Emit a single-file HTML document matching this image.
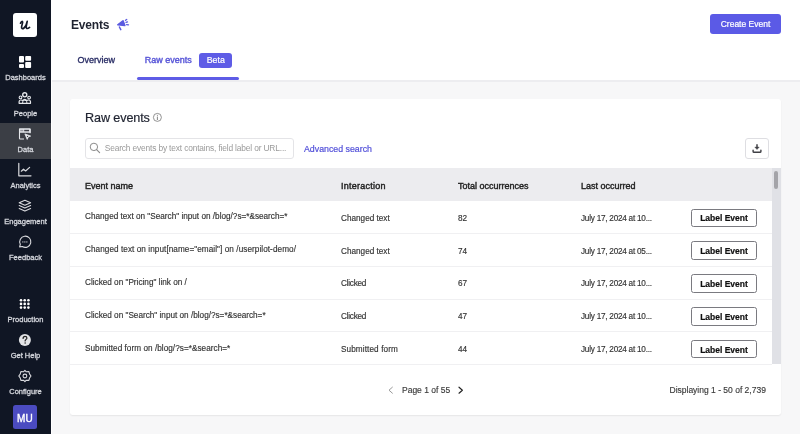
<!DOCTYPE html>
<html><head><meta charset="utf-8">
<style>
*{box-sizing:border-box;margin:0;padding:0}
html,body{width:800px;height:434px;overflow:hidden;background:#f7f7f8;font-family:"Liberation Sans",sans-serif;position:relative}
.abs{position:absolute}
.t{position:absolute;white-space:nowrap;line-height:1}
svg{position:absolute;overflow:visible}
</style></head><body>
<div style="position:absolute;left:0;top:0;width:800px;height:434px;will-change:transform">
<div class="abs" style="left:0;top:0;width:51px;height:434px;background:#101624"></div>
<div class="abs" style="left:51px;top:0;width:1px;height:434px;background:#fff"></div>
<div class="abs" style="left:13px;top:13px;width:24px;height:24px;background:#fff;border-radius:3px"></div>
<svg style="left:13px;top:13px" width="24" height="24" viewBox="0 0 24 24"><path d="M7.5 10.2 C8.3 8.2 9.8 7.8 9.6 9.6 L8.6 13.6 C8.2 15.6 9.6 16.2 11 15 C12.4 13.8 13.6 11.4 14.2 8.4 M14.2 8.4 L13.2 13.6 C12.9 15.4 14 16.3 16.6 14.4" fill="none" stroke="#111827" stroke-width="1.65" stroke-linecap="round" stroke-linejoin="round"/></svg>
<div class="abs" style="left:0;top:123px;width:51px;height:36px;background:#3b3e45"></div>
<svg style="left:0;top:0" width="51" height="434" viewBox="0 0 51 434">
 <g fill="#fff">
  <rect x="19" y="56" width="5" height="6.6" rx="1"/>
  <rect x="25.2" y="56" width="5.9" height="4.8" rx="1"/>
  <rect x="19" y="63.9" width="5" height="4" rx="1"/>
  <rect x="25.2" y="62" width="5.9" height="5.9" rx="1"/>
 </g>
 <g fill="none" stroke="#e5e7eb" stroke-linejoin="round">
  <circle cx="24.75" cy="94.8" r="2.05" stroke-width="1.35"/>
  <circle cx="20.5" cy="97.4" r="1.35" stroke-width="1.1"/>
  <circle cx="29.1" cy="97.6" r="1.35" stroke-width="1.1"/>
  <path d="M19.1 103.3 V101.9 Q19.1 100 21 100 Q22.2 100 22.8 100.6 Q23.5 99.4 24.75 99.4 Q26 99.4 26.7 100.6 Q27.3 100 28.5 100 Q30.5 100 30.5 101.9 V103.3 Z" stroke-width="1.2"/>
  <path d="M22.7 103.2 V101.8 Q22.7 100.3 24.75 100.3 Q26.8 100.3 26.8 101.8 V103.2" stroke-width="1"/>
 </g>
 <path d="M19.6 128.2 H30 Q30.6 128.2 30.6 128.8 V132.8 H19 V128.8 Q19 128.2 19.6 128.2 Z" fill="#e5e7eb"/>
 <rect x="24.2" y="129.8" width="5" height="1.5" fill="#3b3e45"/>
 <rect x="20.2" y="129.8" width="3.2" height="1.5" fill="#9a9ca3"/>
 <g fill="none" stroke="#e5e7eb" stroke-width="1.1" stroke-linejoin="round">
  <path d="M24 139 H20.2 Q19.5 139 19.5 138.3 V129 M30.1 129 V133.2"/>
 </g>
 <path d="M24.9 133.9 L30.7 136.1 L28.2 137 L27.2 139.4 Z" fill="#e5e7eb" stroke="#e5e7eb" stroke-width="0.8" stroke-linejoin="round"/>
 <circle cx="27.5" cy="136.4" r="0.6" fill="#3b3e45"/>
 <g fill="none" stroke="#d9dade" stroke-width="1.2" stroke-linecap="round" stroke-linejoin="round">
  <path d="M18.8 163.3 V175.8 H31"/>
  <path d="M21.3 171.2 L23.5 169.2 L25.6 171 L29.6 167.4"/>
 </g>
 <g fill="none" stroke="#d9dade" stroke-width="1.1" stroke-linejoin="round" stroke-linecap="round">
  <path d="M19.2 202.7 L24.9 200.2 L30.6 202.7 L24.9 205.2 Z"/>
  <path d="M19.2 205.6 L24.9 208.1 L30.6 205.6"/>
  <path d="M19.2 208.6 L24.9 211.1 L30.6 208.6"/>
 </g>
 <g fill="none" stroke="#d9dade" stroke-width="1.1">
  <path d="M19.6 246.9 L20.3 244.3 A5.6 5.6 0 1 1 22.3 246.5 Z" stroke-linejoin="round"/>
 </g>
 <g fill="#d9dade"><rect x="22.3" y="241.4" width="1.1" height="1.1"/><rect x="24.3" y="241.4" width="1.1" height="1.1"/><rect x="26.3" y="241.4" width="1.1" height="1.1"/></g>
 <g fill="#fff">
  <circle cx="21" cy="300.2" r="1.3"/><circle cx="24.7" cy="300.2" r="1.3"/><circle cx="28.4" cy="300.2" r="1.3"/>
  <circle cx="21" cy="303.9" r="1.3"/><circle cx="24.7" cy="303.9" r="1.3"/><circle cx="28.4" cy="303.9" r="1.3"/>
  <circle cx="21" cy="307.6" r="1.3"/><circle cx="24.7" cy="307.6" r="1.3"/><circle cx="28.4" cy="307.6" r="1.3"/>
 </g>
 <circle cx="24.9" cy="340" r="6" fill="#e2e3e6"/>
 <path d="M23.1 338.4 C23.1 336.9 24 336.3 25 336.3 C26.1 336.3 26.9 337 26.9 338 C26.9 339.3 25.1 339.5 25.1 341" fill="none" stroke="#222" stroke-width="1.2" stroke-linecap="round"/>
 <circle cx="25.1" cy="343" r="0.75" fill="#222"/>
 <g fill="none" stroke="#d9dade" stroke-width="1.1" stroke-linejoin="round">
  <path d="M24.9 370.3 L26.3 371.8 L28.9 371.6 L29.6 374.1 L31 376 L29.6 377.9 L28.9 380.4 L26.3 380.2 L24.9 381.7 L23.5 380.2 L20.9 380.4 L20.2 377.9 L18.8 376 L20.2 374.1 L20.9 371.6 L23.5 371.8 Z"/>
  <circle cx="24.9" cy="376" r="1.9"/>
 </g>
</svg>
<div class="t" style="left:0px;top:74px;font-size:7.5px;color:#d4d6dc;width:51px;text-align:center;-webkit-text-stroke:0.3px #d4d6dc;">Dashboards</div>

<div class="t" style="left:0px;top:110px;font-size:7.5px;color:#d4d6dc;width:51px;text-align:center;-webkit-text-stroke:0.3px #d4d6dc;">People</div>

<div class="t" style="left:0px;top:146px;font-size:7.5px;color:#d4d6dc;width:51px;text-align:center;-webkit-text-stroke:0.3px #d4d6dc;">Data</div>

<div class="t" style="left:0px;top:182px;font-size:7.5px;color:#d4d6dc;width:51px;text-align:center;-webkit-text-stroke:0.3px #d4d6dc;">Analytics</div>

<div class="t" style="left:0px;top:218px;font-size:7.5px;color:#d4d6dc;width:51px;text-align:center;-webkit-text-stroke:0.3px #d4d6dc;">Engagement</div>

<div class="t" style="left:0px;top:254px;font-size:7.5px;color:#d4d6dc;width:51px;text-align:center;-webkit-text-stroke:0.3px #d4d6dc;">Feedback</div>

<div class="t" style="left:0px;top:316px;font-size:7.5px;color:#d4d6dc;width:51px;text-align:center;-webkit-text-stroke:0.3px #d4d6dc;">Production</div>

<div class="t" style="left:0px;top:352px;font-size:7.5px;color:#d4d6dc;width:51px;text-align:center;-webkit-text-stroke:0.3px #d4d6dc;">Get Help</div>

<div class="t" style="left:0px;top:388px;font-size:7.5px;color:#d4d6dc;width:51px;text-align:center;-webkit-text-stroke:0.3px #d4d6dc;">Configure</div>

<div class="abs" style="left:13px;top:405px;width:24px;height:24px;background:#4b4bc0;border-radius:2.5px"></div>
<div class="t" style="left:13px;top:414px;font-size:10px;color:#fff;letter-spacing:0.3px;width:24px;text-align:center;-webkit-text-stroke:0.35px #fff;">MU</div>

<div class="abs" style="left:52px;top:0;width:748px;height:80px;background:#fff"></div>
<div class="abs" style="left:52px;top:80px;width:748px;height:2px;background:#ededf0"></div>
<div class="t" style="left:71px;top:19px;font-size:12px;color:#1f2330;font-weight:700;letter-spacing:-0.2px;">Events</div>

<svg style="left:112px;top:14px" width="22" height="22" viewBox="0 0 22 22">
 <path d="M5.8 10.8 L11 6.8 L12.8 11.5 Z" fill="#5b5be0" stroke="#5b5be0" stroke-width="1.6" stroke-linejoin="round"/>
 <path d="M7.4 13 L8.8 15.6" stroke="#5b5be0" stroke-width="1.5" stroke-linecap="round"/>
 <path d="M13.5 6.3 L14.7 5.4" stroke="#5b5be0" stroke-width="1.3" stroke-linecap="round"/>
 <path d="M14 8.4 L15.5 7.9" stroke="#5b5be0" stroke-width="1.3" stroke-linecap="round"/>
 <path d="M14.6 10.6 L16.5 10.8" stroke="#5b5be0" stroke-width="1.3" stroke-linecap="round"/>
</svg>
<div class="abs" style="left:710px;top:14px;width:71px;height:20px;background:#5b5ae6;border-radius:3px"></div>
<div class="t" style="left:710px;top:20px;font-size:8.5px;color:#fff;width:71px;text-align:center;-webkit-text-stroke:0.2px #fff;">Create Event</div>

<div class="t" style="left:77.5px;top:56px;font-size:9px;color:#262a63;-webkit-text-stroke:0.3px #262a63;">Overview</div>

<div class="t" style="left:144.7px;top:56px;font-size:9px;color:#5957d8;-webkit-text-stroke:0.4px #5957d8;">Raw events</div>

<div class="abs" style="left:199.4px;top:52.6px;width:32.6px;height:15.2px;background:#5e5ce6;border-radius:3px"></div>
<div class="t" style="left:199.5px;top:56px;font-size:8.8px;color:#fff;width:32.5px;text-align:center;-webkit-text-stroke:0.2px #fff;">Beta</div>

<div class="abs" style="left:137px;top:77px;width:102px;height:2.6px;background:#5e5ce6;border-radius:2px"></div>
<div class="abs" style="left:70px;top:99px;width:711px;height:316px;background:#fff;border-radius:3px;box-shadow:0 1px 1.5px rgba(0,0,0,.07)"></div>
<div class="t" style="left:85px;top:112px;font-size:12.6px;color:#1f2330;letter-spacing:-0.1px;-webkit-text-stroke:0.2px #1f2330;">Raw events</div>

<svg style="left:148px;top:108px" width="20" height="20" viewBox="0 0 20 20">
 <circle cx="9.4" cy="9.4" r="4" fill="none" stroke="#777" stroke-width="0.8"/>
 <path d="M9.4 8.6 V12" stroke="#777" stroke-width="0.9"/>
 <circle cx="9.4" cy="7.3" r="0.55" fill="#777"/>
</svg>
<div class="abs" style="left:84.5px;top:138px;width:209.5px;height:20.5px;border:1px solid #e4e4e7;border-radius:3px;background:#fff"></div>
<svg style="left:82px;top:134px" width="30" height="28" viewBox="0 0 30 28">
 <circle cx="11.9" cy="12.9" r="3.7" fill="none" stroke="#8a8a8a" stroke-width="1"/>
 <path d="M14.6 15.6 L17.6 18.6" stroke="#8a8a8a" stroke-width="1.1" stroke-linecap="round"/>
</svg>
<div class="t" style="left:104.8px;top:144px;font-size:8.4px;color:#9a9a9a;letter-spacing:-0.16px;">Search events by text contains, field label or URL...</div>

<div class="t" style="left:304px;top:145px;font-size:8.8px;color:#5250d9;-webkit-text-stroke:0.2px #5250d9;">Advanced search</div>

<div class="abs" style="left:745px;top:137.5px;width:24px;height:21px;border:1px solid #dedee2;border-radius:3px;background:#fff"></div>
<svg style="left:740px;top:132px" width="34" height="32" viewBox="0 0 34 32">
 <path d="M17 12.3 V16" stroke="#3f3f44" stroke-width="1.5"/>
 <path d="M14.8 15.1 L19.2 15.1 L17 17.6 Z" fill="#3f3f44" stroke="#3f3f44" stroke-width="0.4" stroke-linejoin="round"/>
 <path d="M13.1 18.1 V19.4 Q13.1 20.3 14 20.3 H20 Q20.9 20.3 20.9 19.4 V18.1" fill="none" stroke="#3f3f44" stroke-width="1.4" stroke-linecap="round"/>
</svg>
<div class="abs" style="left:70px;top:168.3px;width:701.5px;height:32.3px;background:#ececef"></div>
<div class="abs" style="left:771.5px;top:168.3px;width:9.5px;height:195.9px;background:#e0e1e6"></div>
<div class="abs" style="left:774px;top:171px;width:4.3px;height:18.4px;background:#a4a4a9;border-radius:2px"></div>
<div class="t" style="left:85px;top:182px;font-size:9px;color:#222;-webkit-text-stroke:0.4px #222;">Event name</div>

<div class="t" style="left:341px;top:182px;font-size:9px;color:#222;letter-spacing:0.25px;-webkit-text-stroke:0.4px #222;">Interaction</div>

<div class="t" style="left:458px;top:182px;font-size:9px;color:#222;-webkit-text-stroke:0.4px #222;">Total occurrences</div>

<div class="t" style="left:581px;top:182px;font-size:9px;color:#222;-webkit-text-stroke:0.4px #222;">Last occurred</div>

<div class="abs" style="left:70px;top:233.00px;width:702px;height:1px;background:#f0f0f2"></div>
<div class="t" style="left:85px;top:213px;font-size:8.2px;color:#333333;-webkit-text-stroke:0.15px #333;">Changed text on "Search" input on /blog/?s=*&amp;search=*</div>

<div class="t" style="left:341px;top:215px;font-size:8.2px;color:#333333;-webkit-text-stroke:0.15px #333;">Changed text</div>

<div class="t" style="left:458px;top:215px;font-size:8.2px;color:#333333;-webkit-text-stroke:0.15px #333;">82</div>

<div class="t" style="left:581px;top:215px;font-size:8.2px;color:#333333;letter-spacing:-0.24px;-webkit-text-stroke:0.15px #333;">July 17, 2024 at 10...</div>

<div class="abs" style="left:691px;top:208.50px;width:66px;height:18.2px;border:1px solid #7a7a80;border-radius:2.5px;background:#fff"></div>
<div class="t" style="left:691px;top:214px;font-size:8.5px;color:#111;font-weight:700;width:66px;text-align:center;-webkit-text-stroke:0.2px #111;">Label Event</div>

<div class="abs" style="left:70px;top:265.75px;width:702px;height:1px;background:#f0f0f2"></div>
<div class="t" style="left:85px;top:246px;font-size:8.2px;color:#333333;letter-spacing:0.06px;-webkit-text-stroke:0.15px #333;">Changed text on input[name="email"] on /userpilot-demo/</div>

<div class="t" style="left:341px;top:248px;font-size:8.2px;color:#333333;-webkit-text-stroke:0.15px #333;">Changed text</div>

<div class="t" style="left:458px;top:248px;font-size:8.2px;color:#333333;-webkit-text-stroke:0.15px #333;">74</div>

<div class="t" style="left:581px;top:248px;font-size:8.2px;color:#333333;letter-spacing:-0.24px;-webkit-text-stroke:0.15px #333;">July 17, 2024 at 05...</div>

<div class="abs" style="left:691px;top:241.44px;width:66px;height:18.2px;border:1px solid #7a7a80;border-radius:2.5px;background:#fff"></div>
<div class="t" style="left:691px;top:247px;font-size:8.5px;color:#111;font-weight:700;width:66px;text-align:center;-webkit-text-stroke:0.2px #111;">Label Event</div>

<div class="abs" style="left:70px;top:298.50px;width:702px;height:1px;background:#f0f0f2"></div>
<div class="t" style="left:85px;top:279px;font-size:8.2px;color:#333333;-webkit-text-stroke:0.15px #333;">Clicked on "Pricing" link on /</div>

<div class="t" style="left:341px;top:280px;font-size:8.2px;color:#333333;letter-spacing:-0.25px;-webkit-text-stroke:0.15px #333;">Clicked</div>

<div class="t" style="left:458px;top:280px;font-size:8.2px;color:#333333;-webkit-text-stroke:0.15px #333;">67</div>

<div class="t" style="left:581px;top:280px;font-size:8.2px;color:#333333;letter-spacing:-0.24px;-webkit-text-stroke:0.15px #333;">July 17, 2024 at 10...</div>

<div class="abs" style="left:691px;top:274.38px;width:66px;height:18.2px;border:1px solid #7a7a80;border-radius:2.5px;background:#fff"></div>
<div class="t" style="left:691px;top:280px;font-size:8.5px;color:#111;font-weight:700;width:66px;text-align:center;-webkit-text-stroke:0.2px #111;">Label Event</div>

<div class="abs" style="left:70px;top:331.25px;width:702px;height:1px;background:#f0f0f2"></div>
<div class="t" style="left:85px;top:312px;font-size:8.2px;color:#333333;-webkit-text-stroke:0.15px #333;">Clicked on "Search" input on /blog/?s=*&amp;search=*</div>

<div class="t" style="left:341px;top:313px;font-size:8.2px;color:#333333;letter-spacing:-0.25px;-webkit-text-stroke:0.15px #333;">Clicked</div>

<div class="t" style="left:458px;top:313px;font-size:8.2px;color:#333333;-webkit-text-stroke:0.15px #333;">47</div>

<div class="t" style="left:581px;top:313px;font-size:8.2px;color:#333333;letter-spacing:-0.24px;-webkit-text-stroke:0.15px #333;">July 17, 2024 at 10...</div>

<div class="abs" style="left:691px;top:307.32px;width:66px;height:18.2px;border:1px solid #7a7a80;border-radius:2.5px;background:#fff"></div>
<div class="t" style="left:691px;top:313px;font-size:8.5px;color:#111;font-weight:700;width:66px;text-align:center;-webkit-text-stroke:0.2px #111;">Label Event</div>

<div class="abs" style="left:70px;top:364.00px;width:702px;height:1px;background:#f0f0f2"></div>
<div class="t" style="left:85px;top:345px;font-size:8.2px;color:#333333;letter-spacing:0.04px;-webkit-text-stroke:0.15px #333;">Submitted form on /blog/?s=*&amp;search=*</div>

<div class="t" style="left:341px;top:346px;font-size:8.2px;color:#333333;letter-spacing:0.1px;-webkit-text-stroke:0.15px #333;">Submitted form</div>

<div class="t" style="left:458px;top:346px;font-size:8.2px;color:#333333;-webkit-text-stroke:0.15px #333;">44</div>

<div class="t" style="left:581px;top:346px;font-size:8.2px;color:#333333;letter-spacing:-0.24px;-webkit-text-stroke:0.15px #333;">July 17, 2024 at 10...</div>

<div class="abs" style="left:691px;top:340.26px;width:66px;height:18.2px;border:1px solid #7a7a80;border-radius:2.5px;background:#fff"></div>
<div class="t" style="left:691px;top:346px;font-size:8.5px;color:#111;font-weight:700;width:66px;text-align:center;-webkit-text-stroke:0.2px #111;">Label Event</div>

<svg style="left:380px;top:380px" width="90" height="20" viewBox="0 0 90 20">
 <path d="M12.4 7.2 L9 10.2 L12.4 13.2" fill="none" stroke="#999" stroke-width="1" stroke-linecap="round" stroke-linejoin="round"/>
 <path d="M79 7.2 L82.4 10.2 L79 13.2" fill="none" stroke="#222" stroke-width="1.15" stroke-linecap="round" stroke-linejoin="round"/>
</svg>
<div class="t" style="left:402px;top:386px;font-size:8.5px;color:#3a3a3a;-webkit-text-stroke:0.15px #3a3a3a;">Page 1 of 55</div>

<div class="t" style="left:669.5px;top:386px;font-size:8.5px;color:#3a3a3a;-webkit-text-stroke:0.15px #3a3a3a;">Displaying 1 - 50 of 2,739</div>

</div>
</body></html>
